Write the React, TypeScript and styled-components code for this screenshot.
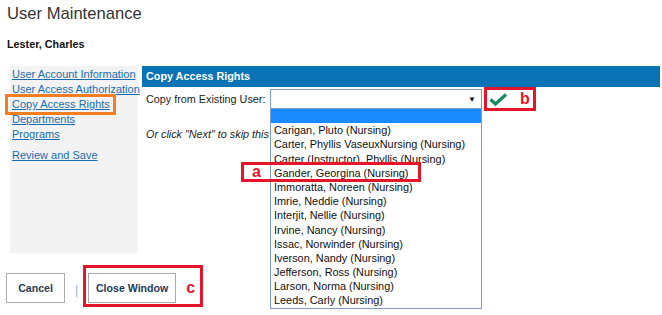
import * as React from 'react'
import styled, { createGlobalStyle } from 'styled-components'

const colours = {
  text: '#333333',
  link: '#1a6cb0',
  navBg: '#f3f3f3',
  header: '#0a73b6',
  selectBorder: '#7f9ccf',
  highlight: '#1a8cff',
  red: '#e5162a',
  orange: '#f47d20',
  green: '#168a5c',
  buttonText: '#1d3a5b',
}

const users = [
  'Carigan, Pluto (Nursing)',
  'Carter, Phyllis VaseuxNursing (Nursing)',
  'Carter (Instructor), Phyllis (Nursing)',
  'Gander, Georgina (Nursing)',
  'Immoratta, Noreen (Nursing)',
  'Imrie, Neddie (Nursing)',
  'Interjit, Nellie (Nursing)',
  'Irvine, Nancy (Nursing)',
  'Issac, Norwinder (Nursing)',
  'Iverson, Nandy (Nursing)',
  'Jefferson, Ross (Nursing)',
  'Larson, Norma (Nursing)',
  'Leeds, Carly (Nursing)',
]

const navLinks = [
  { label: 'User Account Information' },
  { label: 'User Access Authorization' },
  { label: 'Copy Access Rights', active: true },
  { label: 'Departments' },
  { label: 'Programs' },
]

const GlobalStyle = createGlobalStyle`
  body {
    margin: 0;
    background: white;
    font-family: 'Liberation Sans', Arial, sans-serif;
    color: ${colours.text};
  }
`

const Check = () => (
  <svg width="19" height="13" viewBox="0 0 19 13">
    <path
      d="M1.5 6.5 L6.5 11 L17 1.5"
      fill="none"
      stroke={colours.green}
      strokeWidth="3.2"
    />
  </svg>
)

export default function App() {
  return (
    <Page>
      <GlobalStyle />
      <Title>User Maintenance</Title>
      <UserName>Lester, Charles</UserName>

      <Body>
        <Nav>
          {navLinks.map(link => (
            <NavLink key={link.label} href="#" $active={link.active}>
              {link.label}
            </NavLink>
          ))}
          <NavLink href="#" $spaced>
            Review and Save
          </NavLink>
        </Nav>

        <Main>
          <SectionHeader>Copy Access Rights</SectionHeader>
          <FormRow>
            <Label>Copy from Existing User:</Label>
            <SelectWrap>
              <SelectBox>
                <Arrow>▼</Arrow>
              </SelectBox>
              <OptionList>
                <Option $selected>&nbsp;</Option>
                {users.map(u => (
                  <Option key={u}>{u}</Option>
                ))}
                <Marker $top={53} $left={-30} $width={180} $height={20}>
                  <MarkerLetter>a</MarkerLetter>
                </Marker>
              </OptionList>
            </SelectWrap>
            <Callout>
              <Check />
              <CalloutLetter>b</CalloutLetter>
            </Callout>
          </FormRow>
          <Hint>Or click "Next" to skip this step.</Hint>
        </Main>
      </Body>

      <Footer>
        <Button>Cancel</Button>
        <Divider>|</Divider>
        <ButtonCallout>
          <Button $wide>Close Window</Button>
          <CalloutLetter>c</CalloutLetter>
        </ButtonCallout>
      </Footer>
    </Page>
  )
}

const Page = styled.div`
  width: 662px;
  height: 315px;
  overflow: hidden;
  position: relative;
`

const Title = styled.h1`
  margin: 0;
  padding: 4px 0 0 7px;
  font-size: 16.6px;
  line-height: 20px;
  font-weight: normal;
  color: #333;
`

const UserName = styled.div`
  padding: 13px 0 0 7px;
  font-size: 10.8px;
  line-height: 14px;
  font-weight: bold;
  color: #111;
`

const Body = styled.div`
  display: flex;
  gap: 4px;
  margin-top: 15px;
  padding-left: 10px;
`

const Nav = styled.nav`
  width: 128px;
  height: 187px;
  background: ${colours.navBg};
  display: flex;
  flex-direction: column;
  align-items: flex-start;
  padding: 1px 0 0 2px;
  box-sizing: border-box;
`

const NavLink = styled.a<{ $active?: boolean; $spaced?: boolean }>`
  font-size: 11px;
  line-height: 15px;
  white-space: nowrap;
  color: ${colours.link};
  text-decoration: underline;
  margin-top: ${({ $spaced }) => ($spaced ? '6px' : '0')};
  outline: ${({ $active }) => ($active ? `3px solid ${colours.orange}` : 'none')};
  ${({ $active }) => ($active ? 'padding: 0 3px 0 4px; margin-left: -4px;' : '')}
`

const Main = styled.div`
  width: 518px;
  display: flex;
  flex-direction: column;
`

const SectionHeader = styled.div`
  height: 21px;
  line-height: 21px;
  background: ${colours.header};
  color: white;
  font-weight: bold;
  font-size: 10.8px;
  padding-left: 4px;
`

const FormRow = styled.div`
  display: flex;
  align-items: center;
  height: 24px;
  padding-left: 4px;
`

const Label = styled.span`
  font-size: 10.8px;
  width: 124px;
  color: #222;
`

const SelectWrap = styled.div`
  position: relative;
  width: 212px;
  z-index: 2;
`

const SelectBox = styled.div`
  height: 20px;
  border: 1px solid ${colours.selectBorder};
  box-sizing: border-box;
  background: white;
  display: flex;
  align-items: center;
  justify-content: flex-end;
  padding-right: 5px;
`

const Arrow = styled.span`
  font-size: 8px;
  color: #111;
`

const OptionList = styled.div`
  position: absolute;
  top: 100%;
  left: 0;
  width: 212px;
  box-sizing: border-box;
  border: 1px solid ${colours.selectBorder};
  border-top: none;
  background: white;
`

const Option = styled.div<{ $selected?: boolean }>`
  height: 14.2px;
  line-height: 14.2px;
  font-size: 10.9px;
  padding-left: 3px;
  white-space: nowrap;
  color: #111;
  background: ${({ $selected }) => ($selected ? colours.highlight : 'white')};
`

const Marker = styled.div<{ $top: number; $left: number; $width: number; $height: number }>`
  position: absolute;
  top: ${({ $top }) => $top}px;
  left: ${({ $left }) => $left}px;
  width: ${({ $width }) => $width}px;
  height: ${({ $height }) => $height}px;
  border: 3px solid ${colours.red};
  box-sizing: border-box;
  display: flex;
  align-items: center;
  padding-left: 8px;
`

const MarkerLetter = styled.span`
  color: ${colours.red};
  font-weight: bold;
  font-size: 16px;
  line-height: 14px;
`

const Callout = styled.div`
  margin-left: 2px;
  width: 52px;
  height: 24px;
  border: 3px solid ${colours.red};
  box-sizing: border-box;
  display: flex;
  align-items: center;
  padding-left: 2px;
  gap: 12px;
`

const CalloutLetter = styled.span`
  color: ${colours.red};
  font-weight: bold;
  font-size: 16px;
  line-height: 16px;
`

const Hint = styled.div`
  margin-top: 17px;
  padding-left: 4px;
  font-size: 10.8px;
  font-style: italic;
  color: #222;
  white-space: nowrap;
`

const Footer = styled.div`
  display: flex;
  align-items: flex-start;
  margin-top: 12px;
  padding-left: 6px;
`

const Button = styled.button<{ $wide?: boolean }>`
  height: 30px;
  width: ${({ $wide }) => ($wide ? '88px' : '59px')};
  margin-top: ${({ $wide }) => ($wide ? '0' : '8px')};
  background: white;
  border: 1px solid #aaa;
  font-family: 'Liberation Sans', Arial, sans-serif;
  font-weight: bold;
  font-size: 10.6px;
  color: ${colours.buttonText};
  padding: 0;
`

const Divider = styled.span`
  margin: 18px 5px 0 10px;
  color: #8ab4e0;
  font-size: 12px;
`

const ButtonCallout = styled.div`
  display: flex;
  align-items: center;
  gap: 10px;
  width: 120px;
  height: 42px;
  border: 3px solid ${colours.red};
  box-sizing: border-box;
  padding: 5px 0 1px 2px;
`
